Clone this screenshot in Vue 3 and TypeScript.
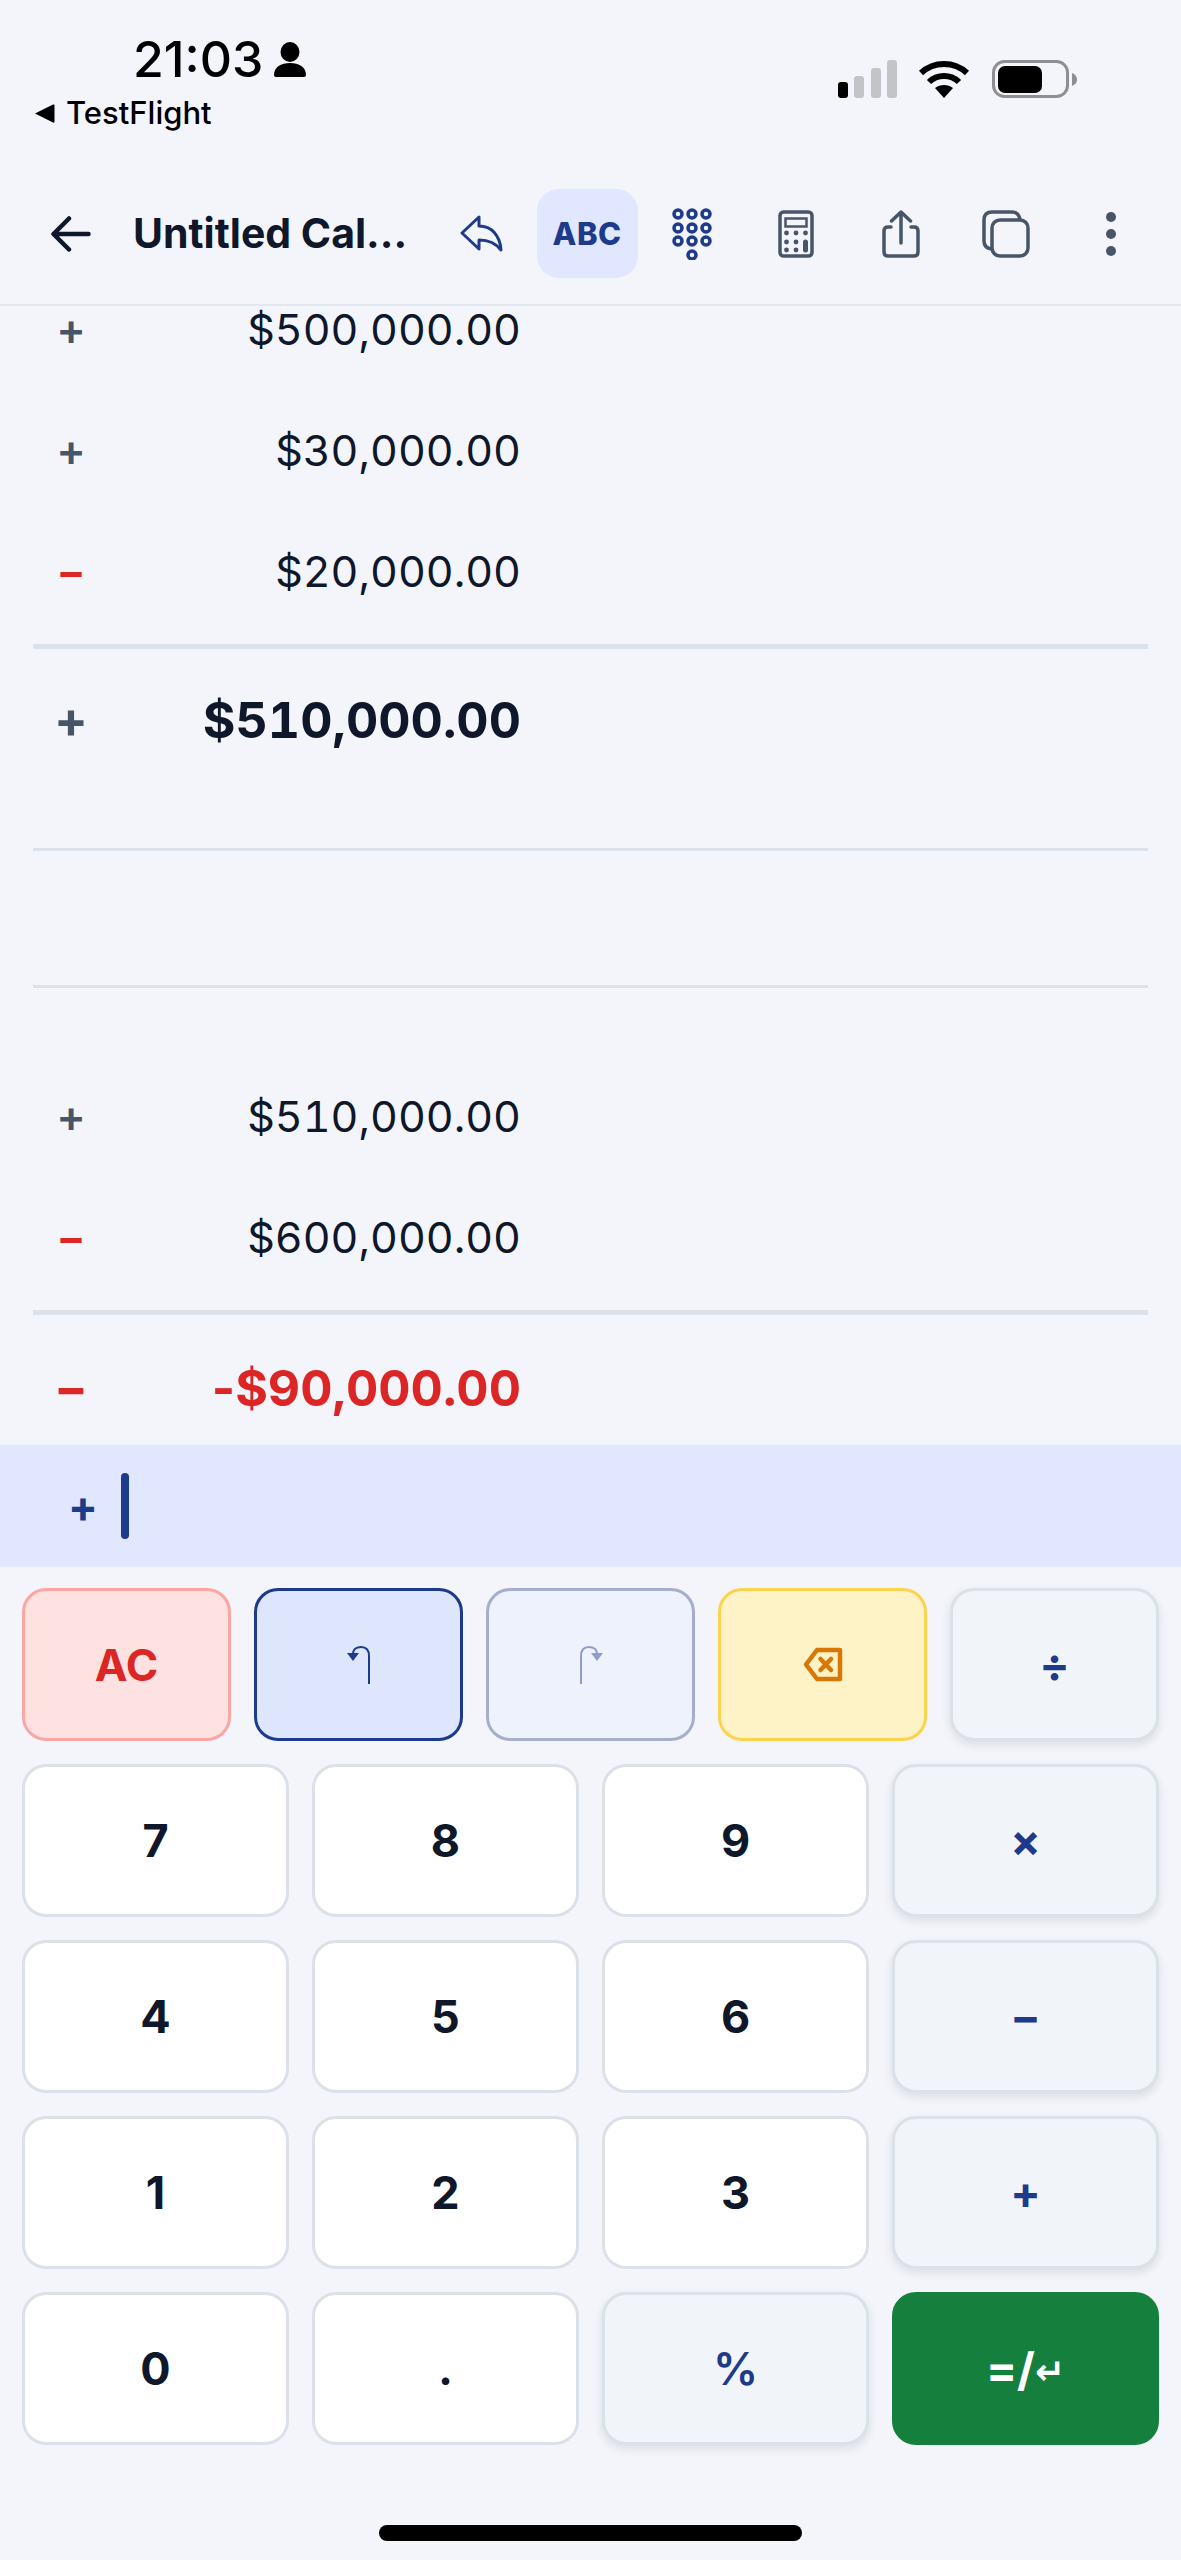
<script setup lang="ts">
type Line = { sign: "+" | "−"; amount: string };

const firstBlock: Line[] = [
  { sign: "+", amount: "$500,000.00" },
  { sign: "+", amount: "$30,000.00" },
  { sign: "−", amount: "$20,000.00" },
];
const secondBlock: Line[] = [
  { sign: "+", amount: "$510,000.00" },
  { sign: "−", amount: "$600,000.00" },
];

type Key = { label: string; kind: "num" | "op" };
const keyRows: Key[][] = [
  [{ label: "7", kind: "num" }, { label: "8", kind: "num" }, { label: "9", kind: "num" }, { label: "×", kind: "op" }],
  [{ label: "4", kind: "num" }, { label: "5", kind: "num" }, { label: "6", kind: "num" }, { label: "−", kind: "op" }],
  [{ label: "1", kind: "num" }, { label: "2", kind: "num" }, { label: "3", kind: "num" }, { label: "+", kind: "op" }],
];
</script>

<template>
  <div class="page">
    <div class="status">
      <div class="status-left">
        <div class="time-row">
          <span class="time">21:03</span>
          <svg class="person" width="32" height="35" viewBox="0 0 32 35">
            <ellipse cx="16" cy="10" rx="9.5" ry="10" fill="#000" />
            <path d="M0 33 C0 25 7 21 16 21 C25 21 32 25 32 33 Q32 35 30 35 L2 35 Q0 35 0 33 Z" fill="#000" />
          </svg>
        </div>
        <div class="back-app">
          <svg width="21" height="21" viewBox="0 0 21 21">
            <path d="M1 10.5 L19 1.5 Q20.500 1 20.500 2.500 L20.500 18.500 Q20.500 20 19 19.500 Z" fill="#000" />
          </svg>
          <span>TestFlight</span>
        </div>
      </div>
      <svg class="status-icons" width="240" height="38" viewBox="0 0 240 38">
        <rect x="0" y="22" width="10" height="16" rx="3" fill="#000" />
        <rect x="16" y="16" width="10" height="22" rx="3" fill="#c2c4c6" />
        <rect x="33" y="8" width="10" height="30" rx="3" fill="#c2c4c6" />
        <rect x="49" y="0" width="10" height="38" rx="3" fill="#c2c4c6" />
        <g transform="translate(80 0)" fill="none" stroke="#000" stroke-width="6">
          <path d="M3 13 C16 1 36 1 49 13" />
          <path d="M11 22 C19 14 33 14 41 22" />
          <path d="M26 38 L17 28 C22 24 30 24 35 28 Z" fill="#000" stroke="none" />
        </g>
        <rect x="155.500" y="1.500" width="74" height="35" rx="11" fill="none" stroke="#8e8e93" stroke-width="3" />
        <rect x="160" y="6" width="44" height="27" rx="7" fill="#000" />
        <path d="M234 13 Q239 15 239 19.500 Q239 24 234 26 Z" fill="#8e8e93" />
      </svg>
    </div>

    <header class="toolbar">
      <button class="back">
        <svg width="40" height="36" viewBox="0 0 40 36" fill="none" stroke="#0f172a" stroke-width="4.500" stroke-linecap="round" stroke-linejoin="round">
          <path d="M37.500 18 H3 M18 2.500 L2.500 18 L18 33.500" />
        </svg>
      </button>
      <span class="title">Untitled Cal...</span>
      <div class="tools">
        <button class="tool">
          <svg width="44" height="40" viewBox="-2 -2 44 40" fill="none" stroke="#1e3a8a" stroke-width="3" stroke-linejoin="round" stroke-linecap="round">
            <path d="M0 17 L17 1 V10 C30 10 38 20 39 34 C33 26 26 24 17 24 V33 Z" />
          </svg>
        </button>
        <button class="tool active">ABC</button>
        <button class="tool">
          <svg width="40" height="52" viewBox="0 0 40 52" fill="none" stroke="#1e3a8a" stroke-width="3.500">
            <circle cx="6" cy="6" r="4" /><circle cx="20" cy="6" r="4" /><circle cx="34" cy="6" r="4" />
            <circle cx="6" cy="20" r="4" /><circle cx="20" cy="20" r="4" /><circle cx="34" cy="20" r="4" />
            <circle cx="6" cy="33" r="4" /><circle cx="20" cy="33" r="4" /><circle cx="34" cy="33" r="4" />
            <circle cx="20" cy="47" r="4" />
          </svg>
        </button>
        <button class="tool">
          <svg width="36" height="48" viewBox="0 0 36 48">
            <rect x="2" y="2" width="32" height="44" rx="3.500" fill="none" stroke="#475569" stroke-width="3.500" />
            <rect x="7.500" y="8.500" width="21" height="8" fill="none" stroke="#475569" stroke-width="2.500" />
            <g fill="#475569">
              <circle cx="8.500" cy="23" r="2.400" /><circle cx="18" cy="23" r="2.400" /><circle cx="27.500" cy="23" r="2.400" />
              <circle cx="8.500" cy="32" r="2.400" /><circle cx="18" cy="32" r="2.400" />
              <circle cx="8.500" cy="40" r="2.400" /><circle cx="18" cy="40" r="2.400" />
              <rect x="25" y="29.500" width="5" height="13" rx="2.500" />
            </g>
          </svg>
        </button>
        <button class="tool">
          <svg width="38" height="48" viewBox="0 0 38 48" fill="none" stroke="#475569" stroke-width="3.500" stroke-linecap="round" stroke-linejoin="round">
            <path d="M19 2 V33 M9.500 11 L19 2 L28.500 11" />
            <path d="M9 17 H6 Q2 17 2 21 V42 Q2 46 6 46 H32 Q36 46 36 42 V21 Q36 17 32 17 H29" />
          </svg>
        </button>
        <button class="tool">
          <svg width="48" height="48" viewBox="0 0 48 48" fill="none" stroke="#475569" stroke-width="3.500">
            <path d="M9.500 39 Q2 38 2 31 V10 Q2 2 10 2 H30 Q37 2 38 10" />
            <rect x="10" y="10" width="36" height="36" rx="8" />
          </svg>
        </button>
        <button class="tool">
          <svg width="12" height="46" viewBox="0 0 12 46" fill="#475569">
            <circle cx="6" cy="6" r="5" /><circle cx="6" cy="23" r="5" /><circle cx="6" cy="40" r="5" />
          </svg>
        </button>
      </div>
    </header>

    <main class="ledger">
      <div class="line" v-for="row in firstBlock" :key="row.amount">
        <span class="sign" :class="{ minus: row.sign === '−' }">{{ row.sign }}</span>
        <span class="amount">{{ row.amount }}</span>
      </div>
      <div class="rule thick first-total"></div>
      <div class="line total">
        <span class="sign">+</span>
        <span class="amount">$510,000.00</span>
      </div>
      <div class="rule thin after-total"></div>
      <div class="blank"></div>
      <div class="rule thin"></div>
      <div class="block-two">
        <div class="line" v-for="row in secondBlock" :key="row.amount">
          <span class="sign" :class="{ minus: row.sign === '−' }">{{ row.sign }}</span>
          <span class="amount">{{ row.amount }}</span>
        </div>
      </div>
      <div class="rule thick first-total"></div>
      <div class="line total last">
        <span class="sign minus">−</span>
        <span class="amount negative"><span class="hyphen">-</span>$90,000.00</span>
      </div>
    </main>

    <div class="entry">
      <span class="entry-sign">+</span>
      <span class="caret"></span>
    </div>

    <div class="keypad">
      <div class="keys five">
        <button class="key ac">AC</button>
        <button class="key undo">
          <svg width="24" height="40" viewBox="0 0 24 40" fill="none" stroke="#1e3a8a" stroke-width="2">
            <path d="M22 39 V11 C22 5 19 2 14 2 C10 2 6 4 6 9" />
            <path d="M0 8 H12 L6 16 Z" fill="#1e3a8a" stroke="none" />
          </svg>
        </button>
        <button class="key redo">
          <svg width="24" height="40" viewBox="0 0 24 40" fill="none" stroke="#1e3a8a" stroke-width="2">
            <path d="M2 39 V11 C2 5 5 2 10 2 C14 2 18 4 18 9" />
            <path d="M12 8 H24 L18 16 Z" fill="#1e3a8a" stroke="none" />
          </svg>
        </button>
        <button class="key del">
          <svg width="40" height="35" viewBox="0 0 40 35" fill="none" stroke="#d97706" stroke-width="4.500" stroke-linejoin="round" stroke-linecap="round">
            <path d="M3 17.500 L14 3 H37 V32 H14 Z" />
            <path d="M17.500 12 L28 23 M28 12 L17.500 23" />
          </svg>
        </button>
        <button class="key op">÷</button>
      </div>
      <div class="keys four" v-for="(row, i) in keyRows" :key="i">
        <button v-for="k in row" :key="k.label" class="key" :class="k.kind">{{ k.label }}</button>
      </div>
      <div class="keys four">
        <button class="key num">0</button>
        <button class="key num">.</button>
        <button class="key op percent">%</button>
        <button class="key equals">=/<span class="enter">↵</span></button>
      </div>
    </div>

    <div class="home-bar"></div>
  </div>
</template>

<style>
html, body { background: #f3f5fa; }
</style>

<style scoped>
.page {
  width: 1181px;
  height: 2560px;
  display: flex;
  flex-direction: column;
  background: #f3f5fa;
  font-family: Inter, "Liberation Sans", sans-serif;
  color: #0f172a;
  overflow: hidden;
}
button { font-family: inherit; padding: 0; margin: 0; border: none; background: none; color: inherit; }

.status { height: 189px; flex: none; display: flex; justify-content: space-between; align-items: flex-start; }
.status-left { padding: 30px 0 0 34px; }
.time-row { display: flex; align-items: center; gap: 11px; padding-left: 99px; height: 58px; }
.time { font-size: 50px; font-weight: 500; color: #000; line-height: 58px; }
.back-app { display: flex; align-items: center; gap: 11px; margin-top: 7px; font-size: 31px; line-height: 36px; color: #000; font-weight: 500; }
.status-icons { margin: 60px 103px 0 0; }

.toolbar {
  height: 115px;
  flex: none;
  display: flex;
  align-items: flex-start;
  border-bottom: 2px solid #e2e8f0;
}
.back { width: 100px; height: 89px; margin-left: 21px; display: flex; align-items: center; justify-content: center; }
.title { margin-left: 12px; font-size: 41px; font-weight: 700; line-height: 89px; color: #0f172a; white-space: nowrap; }
.tools { margin-left: auto; margin-right: 20px; display: flex; gap: 3.700px; }
.tool { width: 101px; height: 89px; display: flex; align-items: center; justify-content: center; border-radius: 22px; }
.tool.active { background: #e0e7ff; color: #1e3a8a; font-size: 31px; font-weight: 800; letter-spacing: 0.5px; }

.ledger { flex: none; height: 1177px; padding: 0 33px; margin-top: -38px; box-sizing: border-box; }
.line { height: 121px; display: flex; align-items: center; }
.sign { width: 76px; text-align: center; font-size: 44px; font-weight: 600; color: #475569; flex: none; }
.sign.minus { color: #dc2626; }
.amount { width: 412px; text-align: right; font-size: 43px; font-weight: 400; color: #0f172a; white-space: nowrap; font-variant-numeric: tabular-nums; }
.rule { background: #dbe2ec; }
.thick { height: 5px; }
.thin { height: 3px; }
.first-total { margin-top: 13px; }
.line.total { height: 142px; }
.line.total .sign { font-size: 50px; font-weight: 700; }
.line.total .amount { font-size: 50px; font-weight: 700; }
.line.total .amount.negative { color: #dc2626; }
.hyphen { font-variant-numeric: normal; }
.line.total.last { height: 145px; }
.after-total { margin-top: 57px; }
.blank { height: 134px; }
.block-two { margin-top: 67px; }

.entry { height: 122px; flex: none; background: #e0e7fe; display: flex; align-items: center; padding-left: 68px; gap: 28px; }
.entry-sign { font-size: 44px; font-weight: 700; color: #1e3a8a; width: 25px; text-align: center; }
.caret { width: 8px; height: 66px; background: #1e3a8a; border-radius: 4px; }

.keypad { flex: none; padding: 21px 22px 0; display: flex; flex-direction: column; gap: 23px; }
.keys { display: grid; gap: 23px; }
.five { grid-template-columns: repeat(5, 1fr); }
.four { grid-template-columns: repeat(4, 1fr); }
.key {
  height: 153px;
  box-sizing: border-box;
  border-radius: 24px;
  border: 3px solid #dbe0e9;
  display: flex;
  align-items: center;
  justify-content: center;
  font-size: 45px;
  font-weight: 700;
}
.num { background: #fff; color: #0f172a; }
.op { background: #f1f4f9; color: #1e3a8a; box-shadow: 0 4px 10px rgba(15, 23, 42, 0.1); }
.percent { font-weight: 600; }
.ac { background: #fee2e2; border-color: #fca5a5; color: #dc2626; font-size: 44px; }
.undo { background: #dde6fd; border-color: #1e3a8a; }
.redo { background: #eef2fd; border-color: #a5afcb; }
.redo svg { opacity: 0.45; }
.del { background: #fef3c7; border-color: #fcd34d; }
.equals { background: #15803d; border-color: #15803d; color: #fff; font-size: 46px; font-weight: 700; }
.enter { font-size: 36px; font-family: "DejaVu Sans", sans-serif; font-weight: 700; margin-top: 6px; }

.home-bar { width: 423px; height: 16px; border-radius: 8px; background: #000; margin: auto auto 19px; flex: none; }
</style>
